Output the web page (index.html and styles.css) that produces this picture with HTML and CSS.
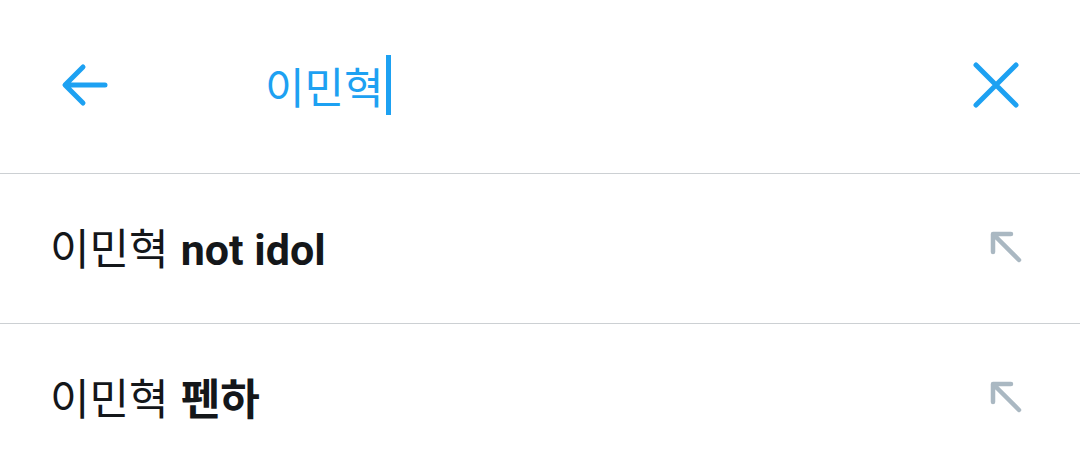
FILE: index.html
```html
<!DOCTYPE html>
<html lang="ko">
<head>
<meta charset="utf-8">
<link rel="stylesheet" href="styles.css">
</head>
<body>
<div class="app">
  <header class="bar">
    <div class="back">
      <svg width="52" height="52" viewBox="0 0 52 52"><path d="M47 26H9M25 8L7 26l18 18" fill="none" stroke="#1da1f2" stroke-width="5" stroke-linecap="round" stroke-linejoin="round"/></svg>
    </div>
    <div class="query"><span class="qtext">이민혁</span><span class="caret"></span></div>
    <div class="clear">
      <svg width="48" height="48" viewBox="0 0 48 48"><path d="M4 4l40 40M44 4L4 44" fill="none" stroke="#1da1f2" stroke-width="5" stroke-linecap="round"/></svg>
    </div>
  </header>
  <div class="row">
    <span class="sug">이민혁 <b>not idol</b></span>
    <svg class="fill" width="36" height="36" viewBox="0 0 36 36"><path d="M5 24V6h18M6 7l25 25" fill="none" stroke="#aab8c2" stroke-width="4.5" stroke-linecap="round" stroke-linejoin="round"/></svg>
  </div>
  <div class="row last">
    <span class="sug">이민혁 <b>펜하</b></span>
    <svg class="fill" width="36" height="36" viewBox="0 0 36 36"><path d="M5 24V6h18M6 7l25 25" fill="none" stroke="#aab8c2" stroke-width="4.5" stroke-linecap="round" stroke-linejoin="round"/></svg>
  </div>
</div>
</body>
</html>
```
FILE: styles.css
```css
html, body { margin: 0; padding: 0; background: #fff; }
body { font-family: Roboto, "Noto Sans CJK KR", sans-serif; }
.app { width: 1080px; height: 471px; overflow: hidden; }
.bar {
  display: flex;
  align-items: center;
  border-bottom: 1px solid #ccd0d3;
  padding-bottom: 4px;
  box-sizing: border-box;
  height: 174px;
}
.back { width: 52px; height: 52px; margin-left: 58px; }
.query { display: flex; align-items: center; margin-left: 155px; flex: 1; }
.qtext { font-size: 43px; color: #1da1f2; font-family: "Noto Sans CJK KR", sans-serif; }
.caret { width: 5px; height: 60px; background: #1da1f2; margin-left: 2px; }
.clear { width: 48px; height: 48px; margin-right: 60px; }
.row {
  height: 150px;
  display: flex;
  align-items: center;
  justify-content: space-between;
  padding: 0 56px 6px 50px;
  border-bottom: 1px solid #ccd0d3;
  box-sizing: border-box;
}
.row.last { border-bottom: none; }
.sug { font-size: 43px; color: #14171a; font-family: "Noto Sans CJK KR", sans-serif; }
.sug b { font-family: Roboto, "Noto Sans CJK KR", sans-serif; font-weight: 700; }
```
